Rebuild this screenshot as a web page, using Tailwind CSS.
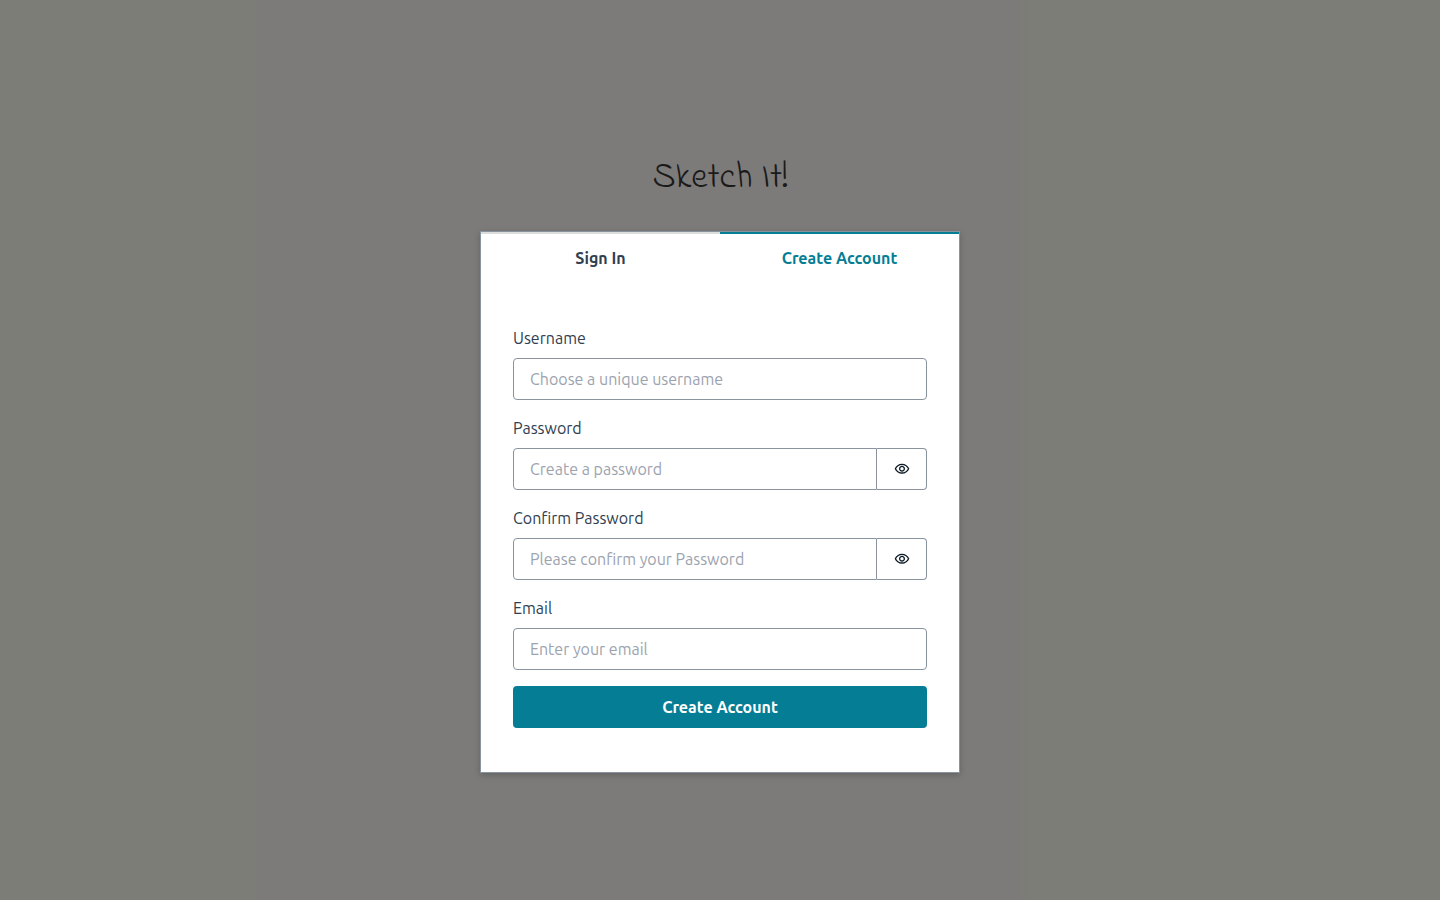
<!DOCTYPE html>
<html lang="en">
<head>
<meta charset="utf-8">
<meta name="viewport" content="width=device-width, initial-scale=1">
<title>Sketch It!</title>
<script src="https://cdn.jsdelivr.net/npm/@tailwindcss/browser@4"></script>
</head>
<body class="min-h-screen bg-[linear-gradient(to_right,#7b7d76_0,#7b7d76_256px,#7d7b79_256px,#7d7b79_1016px,#7b7d76_1032px)] font-[Ubuntu,'Noto_Sans',sans-serif] text-base text-[#304050]">
<main class="flex min-h-screen flex-col items-center px-4 pt-[155px] pb-8">
  <h1 class="mb-7 font-['Indie_Flower',Lato,cursive] text-4xl/12 font-light text-[#1a1a1a]">Sketch It!</h1>
  <section class="w-full max-w-[480px] border border-[#89949f] bg-white shadow-[0_2px_6px_rgba(13,26,38,0.25)]">
    <div role="tablist" class="grid grid-cols-2 font-bold">
      <button type="button" role="tab" aria-selected="false" class="border-t-2 border-[#dcdede] py-3">Sign In</button>
      <button type="button" role="tab" aria-selected="true" class="border-t-2 border-[#047d95] py-3 text-[#047d95]">Create Account</button>
    </div>
    <form class="flex flex-col gap-4 px-8 pt-11 pb-11">
      <div class="flex flex-col gap-2">
        <label for="username">Username</label>
        <input id="username" type="text" placeholder="Choose a unique username" class="h-[42px] w-full rounded border border-[#89949f] px-4 placeholder:text-[#9ca3af]">
      </div>
      <div class="flex flex-col gap-2">
        <label for="password">Password</label>
        <div class="flex">
          <input id="password" type="password" placeholder="Create a password" class="h-[42px] min-w-0 flex-1 rounded-l border border-[#89949f] px-4 placeholder:text-[#9ca3af]">
          <button type="button" aria-label="Show password" class="flex w-[50px] items-center justify-center rounded-r border border-l-0 border-[#89949f] text-[#0d1a26]">
            <svg class="size-4" viewBox="0 0 24 24" fill="currentColor" aria-hidden="true"><path d="M12 6c3.79 0 7.17 2.13 8.82 5.5C19.17 14.87 15.79 17 12 17s-7.17-2.13-8.82-5.5C4.83 8.13 8.21 6 12 6m0-2C7 4 2.73 7.11 1 11.5 2.73 15.89 7 19 12 19s9.27-3.11 11-7.5C21.27 7.11 17 4 12 4zm0 5c1.38 0 2.5 1.12 2.5 2.5S13.38 14 12 14s-2.5-1.12-2.5-2.5S10.62 9 12 9m0-2c-2.48 0-4.5 2.02-4.5 4.5S9.52 16 12 16s4.5-2.02 4.5-4.5S14.48 7 12 7z"/></svg>
          </button>
        </div>
      </div>
      <div class="flex flex-col gap-2">
        <label for="confirm">Confirm Password</label>
        <div class="flex">
          <input id="confirm" type="password" placeholder="Please confirm your Password" class="h-[42px] min-w-0 flex-1 rounded-l border border-[#89949f] px-4 placeholder:text-[#9ca3af]">
          <button type="button" aria-label="Show confirmed password" class="flex w-[50px] items-center justify-center rounded-r border border-l-0 border-[#89949f] text-[#0d1a26]">
            <svg class="size-4" viewBox="0 0 24 24" fill="currentColor" aria-hidden="true"><path d="M12 6c3.79 0 7.17 2.13 8.82 5.5C19.17 14.87 15.79 17 12 17s-7.17-2.13-8.82-5.5C4.83 8.13 8.21 6 12 6m0-2C7 4 2.73 7.11 1 11.5 2.73 15.89 7 19 12 19s9.27-3.11 11-7.5C21.27 7.11 17 4 12 4zm0 5c1.38 0 2.5 1.12 2.5 2.5S13.38 14 12 14s-2.5-1.12-2.5-2.5S10.62 9 12 9m0-2c-2.48 0-4.5 2.02-4.5 4.5S9.52 16 12 16s4.5-2.02 4.5-4.5S14.48 7 12 7z"/></svg>
          </button>
        </div>
      </div>
      <div class="flex flex-col gap-2">
        <label for="email">Email</label>
        <input id="email" type="email" placeholder="Enter your email" class="h-[42px] w-full rounded border border-[#89949f] px-4 placeholder:text-[#9ca3af]">
      </div>
      <button type="submit" class="h-[42px] rounded bg-[#047d95] font-bold text-white">Create Account</button>
    </form>
  </section>
</main>
</body>
</html>
